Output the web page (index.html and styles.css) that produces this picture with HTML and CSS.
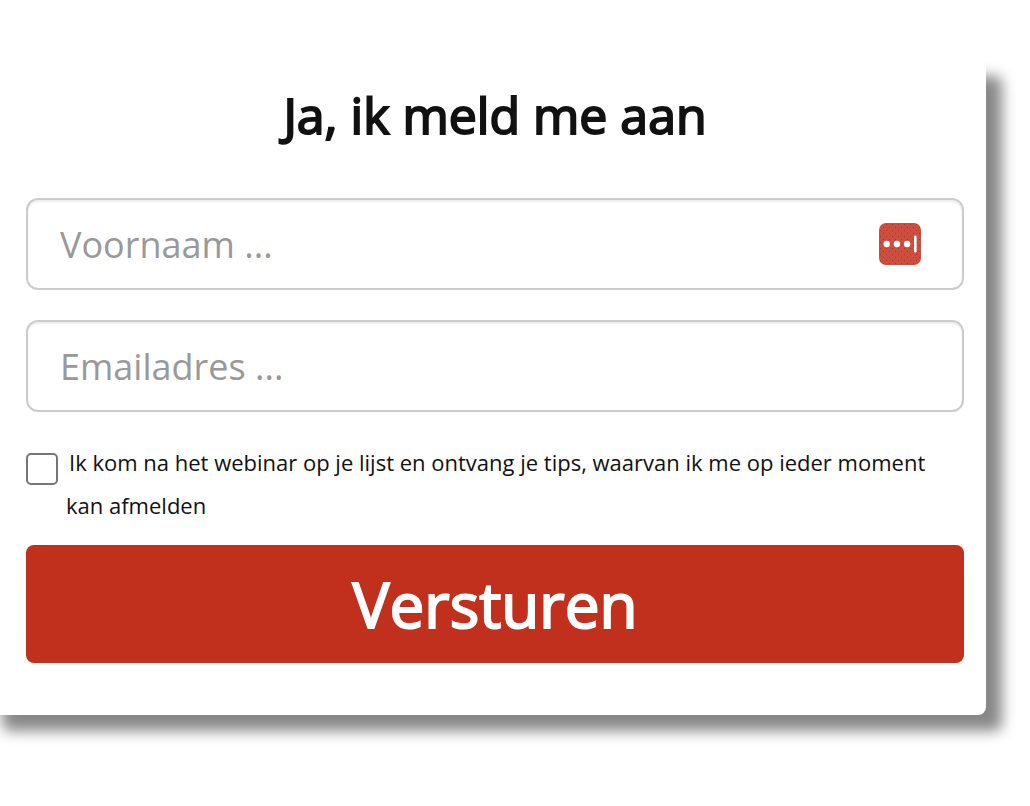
FILE: index.html
```html
<!DOCTYPE html>
<html lang="nl">
<head>
<meta charset="utf-8">
<meta name="viewport" content="width=device-width, initial-scale=1">
<title>Ja, ik meld me aan</title>
<link rel="stylesheet" href="styles.css">
</head>
<body>
<main class="card">
  <h1 class="title">Ja, ik meld me aan</h1>
  <form class="form">
    <div class="field">
      <input class="input" type="text" name="voornaam" placeholder="Voornaam ..." aria-label="Voornaam">
      <button class="autofill" type="button" aria-label="Automatisch invullen">
        <svg class="autofill-icon" viewBox="0 0 42 42" aria-hidden="true">
          <defs>
            <pattern id="grain" width="6" height="6" patternUnits="userSpaceOnUse">
              <rect x="1" y="1" width="1" height="1" fill="#c1301c"/>
              <rect x="4" y="4" width="1" height="1" fill="#c1301c"/>
            </pattern>
          </defs>
          <rect width="42" height="42" rx="7" fill="#cb4f41"/>
          <rect width="42" height="42" rx="7" fill="url(#grain)"/>
          <circle cx="7.700" cy="21" r="3.200" fill="#fff"/>
          <circle cx="17.900" cy="21" r="3.200" fill="#fff"/>
          <circle cx="28.100" cy="21" r="3.200" fill="#fff"/>
          <rect x="35" y="12.500" width="2.600" height="17" rx="1.300" fill="#fff"/>
        </svg>
      </button>
    </div>
    <div class="field">
      <input class="input" type="email" name="email" placeholder="Emailadres ..." aria-label="Emailadres">
    </div>
    <div class="consent">
      <input class="checkbox" type="checkbox" id="consent" name="consent">
      <label class="consent-text" for="consent">Ik kom na het webinar op je lijst en ontvang je tips, waarvan ik me op ieder moment kan afmelden</label>
    </div>
    <button class="submit" type="submit">Versturen</button>
  </form>
</main>
</body>
</html>
```
FILE: styles.css
```css
* {
  box-sizing: border-box;
}

body {
  margin: 0;
  padding: 60px 44px 92px 0;
  background: #fff;
  color: #111;
  font-family: "Open Sans", "Noto Sans", sans-serif;
  overflow-x: hidden;
}

.card {
  margin-left: -14px;
  padding: 20px 22px 52px 40px;
  background: #fff;
  border-radius: 8px;
  box-shadow: 16px 16px 14px #888;
}

.title {
  margin: 0 0 48px;
  font-size: 50px;
  line-height: 70px;
  font-weight: 400;
  text-align: center;
  -webkit-text-stroke: 2px #111;
}

.form {
  display: flex;
  flex-direction: column;
}

.field {
  position: relative;
  margin-bottom: 30px;
}

.input {
  display: block;
  width: 100%;
  height: 92px;
  padding: 0 32px;
  border: 2px solid #ccc;
  border-radius: 12px;
  background: #fff;
  box-shadow: inset 0 2px 2px rgba(0, 0, 0, 0.075);
  color: #111;
  font: inherit;
  font-size: 36px;
}

.input::placeholder {
  color: #999;
  opacity: 1;
}

.autofill {
  position: absolute;
  top: 25px;
  right: 43px;
  width: 42px;
  height: 42px;
  padding: 0;
  border: 0;
  background: none;
}

.autofill-icon {
  display: block;
  width: 42px;
  height: 42px;
}

.field + .consent {
  margin-top: -1px;
}

.consent {
  display: flex;
  align-items: flex-start;
  gap: 8px;
  margin-bottom: 18px;
}

.checkbox {
  flex: none;
  appearance: none;
  width: 32px;
  height: 32px;
  margin: 12px 0 0;
  border: 2px solid #767676;
  border-radius: 5px;
  background: #fff;
}

.checkbox:checked {
  background: #c1301c;
}

.consent-text {
  font-size: 22px;
  line-height: 43px;
  text-indent: 3px;
}

.submit {
  width: 100%;
  height: 118px;
  padding: 0;
  border: 0;
  border-radius: 8px;
  background: #c1301c;
  color: #fff;
  font: inherit;
  font-size: 62px;
  line-height: 86px;
  -webkit-text-stroke: 2px #fff;
}
```
